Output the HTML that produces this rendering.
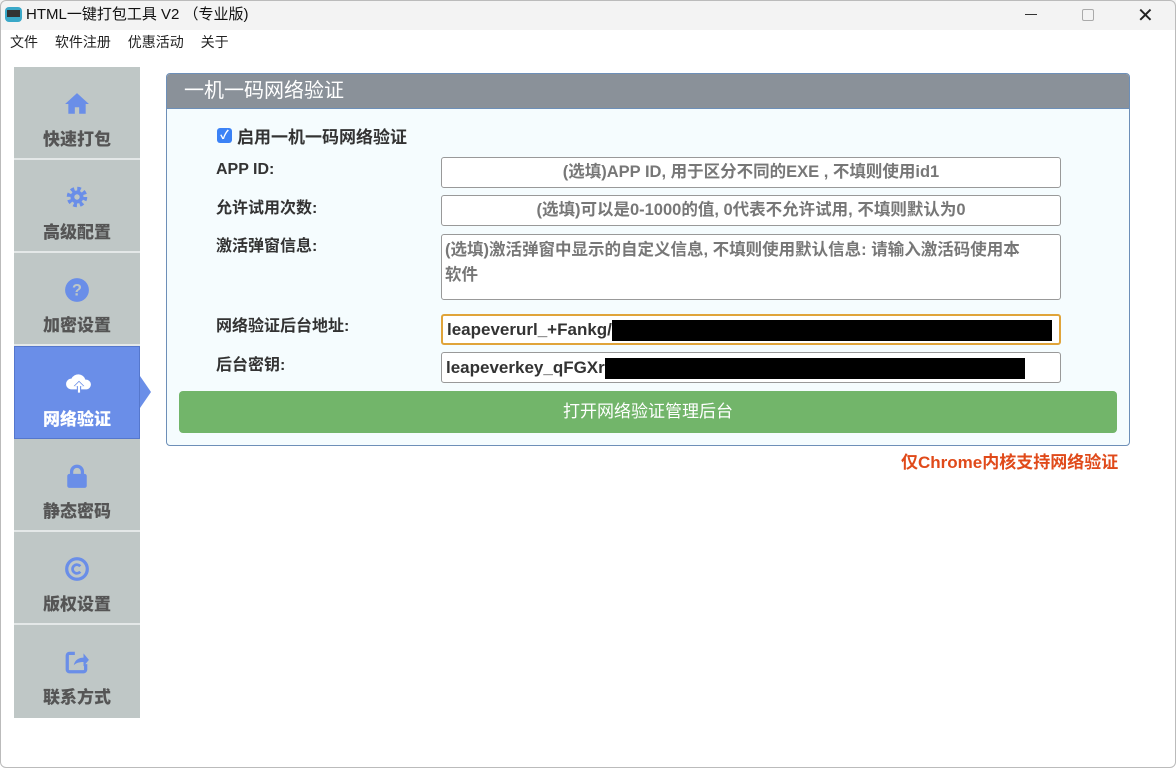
<!DOCTYPE html>
<html><head><meta charset="utf-8"><style>
*{margin:0;padding:0;box-sizing:border-box}
body{width:1176px;height:768px;background:#fff;font-family:"Liberation Sans","Noto Sans CJK SC",sans-serif;position:relative;overflow:hidden}
.frame{position:absolute;left:0;top:0;width:1176px;height:768px;border:1px solid #bbb;pointer-events:none;border-radius:6px}
.title{position:absolute;left:0;top:0;width:1176px;height:30px;background:#f3f3f3;font-size:15px;color:#111}
.menu{position:absolute;top:32px;left:10px;font-size:14px;color:#222;line-height:20px}
.menu span{margin-right:13px}
.side{position:absolute;left:14px;top:67px;width:126px}
.it{height:93px;background:#bfc7c6;border-bottom:2px solid #e4e8e8;text-align:center;color:#555;font-weight:bold;font-size:17px;position:relative}
.it svg{position:absolute;left:50px;top:24px}
.it b{position:absolute;left:0;right:0;top:61px;line-height:24px}
.act{background:#6a8ee8;color:#fff;border:1px solid #5577cc}
.panel{position:absolute;left:166px;top:73px;width:964px;height:373px;border:1px solid #6d8fb8;border-radius:4px;background:#f5fcfe;overflow:hidden}
.ph{height:35px;background:#8a9199;color:#fff;font-size:20px;line-height:24px;padding:5px 0 0 17px;border-bottom:1px solid #6d8fb8}
.lbl{position:absolute;left:49px;font-size:16px;font-weight:bold;color:#333;line-height:20px}
.inp{position:absolute;left:274px;width:620px;border:1px solid #999;border-radius:3px;background:#fff;font-size:16.5px;font-weight:bold;color:#777;text-align:center}
</style></head><body>
<div class="title">
<div style="position:absolute;left:5px;top:7px;width:17px;height:15px;border-radius:4px;background:#3aa8c8"></div>
<div style="position:absolute;left:7px;top:10px;width:13px;height:7px;background:#333"></div>
<span style="position:absolute;left:26px;top:5px;line-height:20px">HTML一键打包工具 V2 （专业版)</span>
<div style="position:absolute;left:1025px;top:14px;width:12px;height:1px;background:#333"></div>
<div style="position:absolute;left:1082px;top:9px;width:12px;height:12px;border:1px solid #aaa;border-radius:2px"></div>
<span style="position:absolute;left:1137px;top:3px;font-size:20px;color:#222">✕</span>
</div>
<div class="menu"><span>文件</span> <span>软件注册</span> <span>优惠活动</span> <span>关于</span></div>
<div class="side">
<div class="it"><svg width="26" height="26" viewBox="0 0 24 24"><path d="M12 2L1 12h3v9h6v-6h4v6h6v-9h3z" fill="#6a8ee8"/></svg><b>快速打包</b></div>
<div class="it"><svg width="26" height="26" viewBox="0 0 24 24"><circle cx="12" cy="12" r="7" fill="none" stroke="#6a8ee8" stroke-width="5" stroke-dasharray="3 2.5"/><circle cx="12" cy="12" r="6" fill="#6a8ee8"/><circle cx="12" cy="12" r="2.5" fill="#bfc7c6"/></svg><b>高级配置</b></div>
<div class="it"><svg width="26" height="26" viewBox="0 0 24 24"><circle cx="12" cy="12" r="11" fill="#6a8ee8"/><text x="12" y="17" fill="#bfc7c6" font-size="15" font-weight="bold" text-anchor="middle" font-family="Liberation Sans">?</text></svg><b>加密设置</b></div>
<div class="it act"><svg width="28" height="26" viewBox="0 0 26 24"><path d="M6 17a5 5 0 0 1 0-10a7 7 0 0 1 13 1a4.5 4.5 0 0 1 1 9z" fill="#fff"/><path d="M13 9l-5 5h3v7h4v-7h3z" fill="#6a8ee8"/><path d="M13 10l-4 4h3v6h2v-6h3z" fill="#fff"/></svg><b>网络验证</b></div>
<div class="it"><svg width="26" height="26" viewBox="0 0 24 24"><path d="M7 11V8a5 5 0 0 1 10 0v3" fill="none" stroke="#6a8ee8" stroke-width="3"/><rect x="3" y="10" width="18" height="13" rx="2" fill="#6a8ee8"/></svg><b>静态密码</b></div>
<div class="it"><svg width="26" height="26" viewBox="0 0 24 24"><circle cx="12" cy="12" r="9.5" fill="none" stroke="#6a8ee8" stroke-width="3"/><path d="M15 9.5a4 4 0 1 0 0 5" fill="none" stroke="#6a8ee8" stroke-width="2.5"/></svg><b>版权设置</b></div>
<div class="it" style="border-bottom:none"><svg width="26" height="26" viewBox="0 0 24 24"><path d="M10 4H5a2 2 0 0 0-2 2v13a2 2 0 0 0 2 2h13a2 2 0 0 0 2-2v-5" fill="none" stroke="#6a8ee8" stroke-width="3"/><path d="M9 15c1-5 5-7 9-7V4l5 6-5 6v-4c-4 0-7 1-9 3z" fill="#6a8ee8"/></svg><b>联系方式</b></div>
</div>
<div style="position:absolute;left:140px;top:376px;width:0;height:0;border-top:16px solid transparent;border-bottom:16px solid transparent;border-left:11px solid #6a8ee8"></div>
<div class="panel">
<div class="ph">一机一码网络验证</div>
<div style="position:absolute;left:50px;top:54px;width:15px;height:15px;background:#3b82f6;border-radius:3px;color:#fff;font-size:12px;text-align:center;line-height:15px;font-weight:bold">✓</div>
<div class="lbl" style="left:70px;top:54px;font-size:17px">启用一机一码网络验证</div>
<div class="lbl" style="top:86px">APP ID:</div>
<div class="inp" style="top:83px;height:31px;line-height:29px">(选填)APP ID, 用于区分不同的EXE , 不填则使用id1</div>
<div class="lbl" style="top:125px">允许试用次数:</div>
<div class="inp" style="top:121px;height:31px;line-height:29px">(选填)可以是0-1000的值, 0代表不允许试用, 不填则默认为0</div>
<div class="lbl" style="top:163px">激活弹窗信息:</div>
<div class="inp" style="top:160px;height:66px;text-align:left;padding:3px 3px;line-height:25px">(选填)激活弹窗中显示的自定义信息, 不填则使用默认信息: 请输入激活码使用本<br>软件</div>
<div class="lbl" style="top:243px">网络验证后台地址:</div>
<div class="inp" style="top:240px;height:31px;line-height:27px;border:2px solid #e0a43a;text-align:left;padding-left:4px;color:#333;font-size:17px;white-space:nowrap;overflow:hidden">leapeverurl_+Fankg/<span style="display:inline-block;vertical-align:middle;width:440px;height:21px;background:#000"></span></div>
<div class="lbl" style="top:282px">后台密钥:</div>
<div class="inp" style="top:278px;height:31px;line-height:29px;text-align:left;padding-left:4px;color:#333;font-size:17px;white-space:nowrap;overflow:hidden">leapeverkey_qFGXr<span style="display:inline-block;vertical-align:middle;width:420px;height:21px;background:#000"></span></div>
<div style="position:absolute;left:12px;top:317px;width:938px;height:42px;background:#72b56a;border-radius:4px;color:#fff;font-size:17px;text-align:center;line-height:42px">打开网络验证管理后台</div>
</div>
<div style="position:absolute;left:901px;top:452px;color:#e04a1a;font-weight:bold;font-size:17px;line-height:22px">仅Chrome内核支持网络验证</div>
<div class="frame"></div>
</body></html>
